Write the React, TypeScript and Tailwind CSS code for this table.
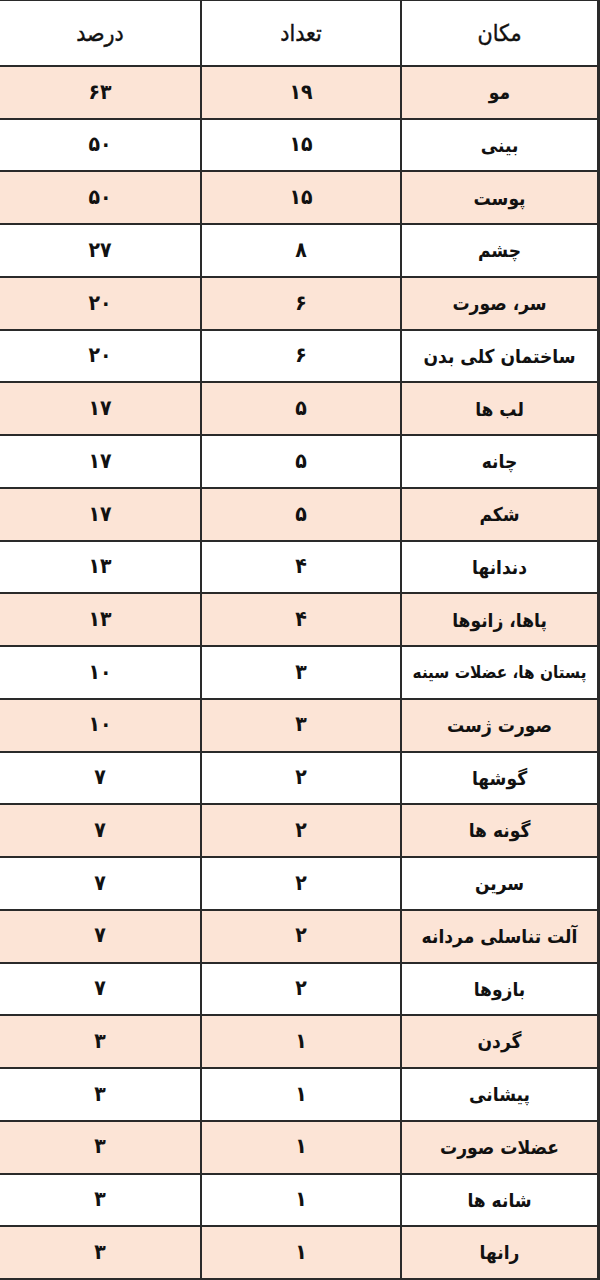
const rows: [string, string, string][] = [
  ['مو', '۱۹', '۶۳'],
  ['بینی', '۱۵', '۵۰'],
  ['پوست', '۱۵', '۵۰'],
  ['چشم', '۸', '۲۷'],
  ['سر، صورت', '۶', '۲۰'],
  ['ساختمان کلی بدن', '۶', '۲۰'],
  ['لب ها', '۵', '۱۷'],
  ['چانه', '۵', '۱۷'],
  ['شکم', '۵', '۱۷'],
  ['دندانها', '۴', '۱۳'],
  ['پاها، زانوها', '۴', '۱۳'],
  ['پستان ها، عضلات سینه', '۳', '۱۰'],
  ['صورت ژست', '۳', '۱۰'],
  ['گوشها', '۲', '۷'],
  ['گونه ها', '۲', '۷'],
  ['سرین', '۲', '۷'],
  ['آلت تناسلی مردانه', '۲', '۷'],
  ['بازوها', '۲', '۷'],
  ['گردن', '۱', '۳'],
  ['پیشانی', '۱', '۳'],
  ['عضلات صورت', '۱', '۳'],
  ['شانه ها', '۱', '۳'],
  ['رانها', '۱', '۳'],
]

function Cell({ text, bg, last, size }: { text: string; bg: string; last?: boolean; size: string }) {
  return (
    <div
      className={`flex items-center justify-center overflow-hidden whitespace-nowrap border-b-2 border-[#2a2a2a] ${
        last ? '' : 'border-l-2'
      } ${bg} ${size} text-[#111]`}
    >
      {text}
    </div>
  )
}

export default function App() {
  return (
    <div
      dir="rtl"
      className="h-[1280px] w-[600px] bg-white"
      style={{ fontFamily: '"DejaVu Sans Condensed", "DejaVu Sans", sans-serif' }}
    >
      <div className="grid h-[1280px] w-[600px] grid-cols-[197px_200px_200px] grid-rows-[66px_repeat(23,1fr)] border-t border-r-[3px] border-l border-[#2a2a2a]">
        <Cell text="مکان" bg="bg-white" size="text-[23px] [-webkit-text-stroke:0.4px_#111]" />
        <Cell text="تعداد" bg="bg-white" size="text-[23px] [-webkit-text-stroke:0.4px_#111]" />
        <Cell text="درصد" bg="bg-white" size="text-[23px] [-webkit-text-stroke:0.4px_#111]" last />
        {rows.map((r, i) => {
          const bg = i % 2 === 0 ? 'bg-[#fce4d6]' : 'bg-white'
          const placeSize = r[0].length > 17 ? 'text-[17px] font-bold tracking-[-0.5px]' : 'text-[19px] font-bold'
          return [
            <Cell key={`a${i}`} text={r[0]} bg={bg} size={placeSize} />,
            <Cell key={`b${i}`} text={r[1]} bg={bg} size="text-[21px] font-bold" />,
            <Cell key={`c${i}`} text={r[2]} bg={bg} size="text-[21px] font-bold" last />,
          ]
        })}
      </div>
    </div>
  )
}
